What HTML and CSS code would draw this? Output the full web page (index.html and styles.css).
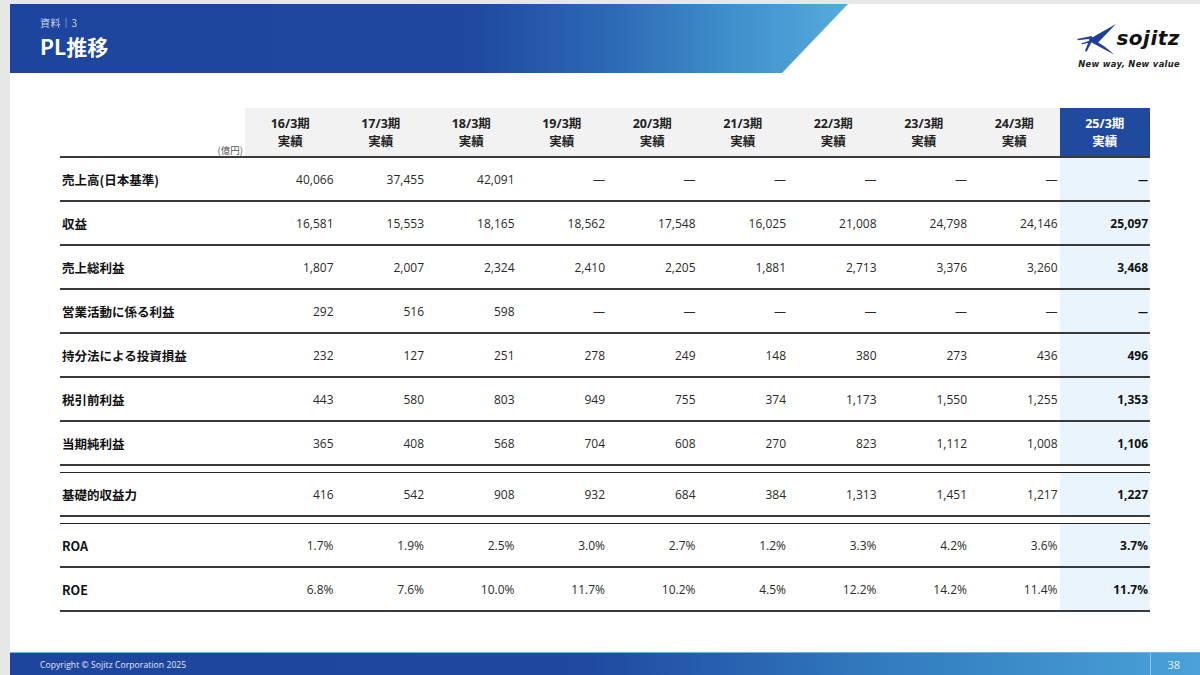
FILE: index.html
```html
<!DOCTYPE html>
<html lang="ja">
<head>
<meta charset="utf-8">
<link rel="stylesheet" href="styles.css">
</head>
<body>
<div class="slide">
  <div class="top">
    <div class="band">
      <div class="crumb">資料｜3</div>
      <div class="title">PL推移</div>
    </div>
    <div class="logo">
      <div class="logo-main">
        <svg class="mark" viewBox="0 0 40 32" width="39" height="31">
          <polygon points="12,16 40,0 20,21" fill="#1d3f9a"/>
          <polygon points="0,15.5 15,12.5 15.5,15 1,16.8" fill="#1d3f9a"/>
          <polygon points="4,20 15,16.5 15.5,18.5 5,21" fill="#1d3f9a"/>
          <polygon points="8,28 14,13 17,14.5 10,28.5" fill="#1d3f9a"/>
          <path d="M16,16 Q27,21 38,31.5 Q27,25.5 15,19 Z" fill="#1d3f9a"/>
        </svg>
        <span class="brand">sojitz</span>
      </div>
      <div class="tagline">New way, New value</div>
    </div>
  </div>

  <div class="table">
    <div class="row head">
      <div class="cell label unit">(億円)</div>
      <div class="cell h">16/3期<br>実績</div>
      <div class="cell h">17/3期<br>実績</div>
      <div class="cell h">18/3期<br>実績</div>
      <div class="cell h">19/3期<br>実績</div>
      <div class="cell h">20/3期<br>実績</div>
      <div class="cell h">21/3期<br>実績</div>
      <div class="cell h">22/3期<br>実績</div>
      <div class="cell h">23/3期<br>実績</div>
      <div class="cell h">24/3期<br>実績</div>
      <div class="cell h hl">25/3期<br>実績</div>
    </div>

    <div class="row">
      <div class="cell label">売上高(日本基準)</div>
      <div class="cell n">40,066</div><div class="cell n">37,455</div><div class="cell n">42,091</div>
      <div class="cell n">—</div><div class="cell n">—</div><div class="cell n">—</div>
      <div class="cell n">—</div><div class="cell n">—</div><div class="cell n">—</div>
      <div class="cell n last"><span class="dash">—</span></div>
    </div>
    <div class="row">
      <div class="cell label">収益</div>
      <div class="cell n">16,581</div><div class="cell n">15,553</div><div class="cell n">18,165</div>
      <div class="cell n">18,562</div><div class="cell n">17,548</div><div class="cell n">16,025</div>
      <div class="cell n">21,008</div><div class="cell n">24,798</div><div class="cell n">24,146</div>
      <div class="cell n last">25,097</div>
    </div>
    <div class="row">
      <div class="cell label">売上総利益</div>
      <div class="cell n">1,807</div><div class="cell n">2,007</div><div class="cell n">2,324</div>
      <div class="cell n">2,410</div><div class="cell n">2,205</div><div class="cell n">1,881</div>
      <div class="cell n">2,713</div><div class="cell n">3,376</div><div class="cell n">3,260</div>
      <div class="cell n last">3,468</div>
    </div>
    <div class="row">
      <div class="cell label">営業活動に係る利益</div>
      <div class="cell n">292</div><div class="cell n">516</div><div class="cell n">598</div>
      <div class="cell n">—</div><div class="cell n">—</div><div class="cell n">—</div>
      <div class="cell n">—</div><div class="cell n">—</div><div class="cell n">—</div>
      <div class="cell n last"><span class="dash">—</span></div>
    </div>
    <div class="row">
      <div class="cell label">持分法による投資損益</div>
      <div class="cell n">232</div><div class="cell n">127</div><div class="cell n">251</div>
      <div class="cell n">278</div><div class="cell n">249</div><div class="cell n">148</div>
      <div class="cell n">380</div><div class="cell n">273</div><div class="cell n">436</div>
      <div class="cell n last">496</div>
    </div>
    <div class="row">
      <div class="cell label">税引前利益</div>
      <div class="cell n">443</div><div class="cell n">580</div><div class="cell n">803</div>
      <div class="cell n">949</div><div class="cell n">755</div><div class="cell n">374</div>
      <div class="cell n">1,173</div><div class="cell n">1,550</div><div class="cell n">1,255</div>
      <div class="cell n last">1,353</div>
    </div>
    <div class="row">
      <div class="cell label">当期純利益</div>
      <div class="cell n">365</div><div class="cell n">408</div><div class="cell n">568</div>
      <div class="cell n">704</div><div class="cell n">608</div><div class="cell n">270</div>
      <div class="cell n">823</div><div class="cell n">1,112</div><div class="cell n">1,008</div>
      <div class="cell n last">1,106</div>
    </div>
    <div class="gap"></div>
    <div class="row">
      <div class="cell label">基礎的収益力</div>
      <div class="cell n">416</div><div class="cell n">542</div><div class="cell n">908</div>
      <div class="cell n">932</div><div class="cell n">684</div><div class="cell n">384</div>
      <div class="cell n">1,313</div><div class="cell n">1,451</div><div class="cell n">1,217</div>
      <div class="cell n last">1,227</div>
    </div>
    <div class="gap"></div>
    <div class="row">
      <div class="cell label">ROA</div>
      <div class="cell n">1.7%</div><div class="cell n">1.9%</div><div class="cell n">2.5%</div>
      <div class="cell n">3.0%</div><div class="cell n">2.7%</div><div class="cell n">1.2%</div>
      <div class="cell n">3.3%</div><div class="cell n">4.2%</div><div class="cell n">3.6%</div>
      <div class="cell n last">3.7%</div>
    </div>
    <div class="row">
      <div class="cell label">ROE</div>
      <div class="cell n">6.8%</div><div class="cell n">7.6%</div><div class="cell n">10.0%</div>
      <div class="cell n">11.7%</div><div class="cell n">10.2%</div><div class="cell n">4.5%</div>
      <div class="cell n">12.2%</div><div class="cell n">14.2%</div><div class="cell n">11.4%</div>
      <div class="cell n last">11.7%</div>
    </div>
  </div>

  <div class="footer">
    <div class="copy">Copyright © Sojitz Corporation 2025</div>
    <div class="page">38</div>
  </div>
</div>
</body>
</html>
```

FILE: styles.css
```css
html, body {
  margin: 0;
  padding: 0;
}
body {
  background: #e7e7e7;
  font-family: "Open Sans", "Noto Sans CJK JP", sans-serif;
  color: #222;
}
.slide {
  margin: 4px 0 0 10px;
  width: 1190px;
  height: 671px;
  background: #fff;
  display: flex;
  flex-direction: column;
  overflow: hidden;
}
.top {
  height: 69px;
  display: flex;
  justify-content: space-between;
  flex-shrink: 0;
}
.band {
  width: 838px;
  height: 69px;
  box-sizing: border-box;
  padding: 12px 0 0 30px;
  background: linear-gradient(90deg, #1d459d 0%, #1f48a0 55%, #2d6ab5 72%, #3f8fcb 86%, #55abdd 100%);
  clip-path: polygon(0 0, 100% 0, calc(100% - 66px) 100%, 0 100%);
  color: #fff;
}
.crumb {
  font-family: "Noto Sans CJK JP", sans-serif;
  font-size: 10px;
  line-height: 14px;
  color: #c9d5ee;
  letter-spacing: 0.5px;
}
.title {
  font-family: "Noto Sans CJK JP", sans-serif;
  font-weight: 700;
  font-size: 21px;
  line-height: 26px;
  margin-top: 3px;
}
.logo {
  margin: 19px 20px 0 0;
  display: flex;
  flex-direction: column;
  align-items: flex-end;
}
.logo-main {
  display: flex;
  align-items: center;
  height: 32px;
}
.mark {
  display: block;
  margin-right: 0px;
}
.brand {
  font-family: "DejaVu Sans", sans-serif;
  font-weight: 700;
  font-style: italic;
  font-size: 20px;
  line-height: 24px;
  color: #111;
  letter-spacing: 0.5px;
  margin-top: -2px;
}
.tagline {
  font-family: "DejaVu Sans", sans-serif;
  font-weight: 700;
  font-style: italic;
  font-size: 8.4px;
  color: #222;
  margin-top: 4px;
  letter-spacing: 0.3px;
}

.table {
  margin: 35px 0 0 50px;
  width: 1090px;
}
.row {
  display: grid;
  grid-template-columns: 185px repeat(10, 90.5px);
  height: 44px;
  box-sizing: border-box;
  border-bottom: 2px solid #3a3a3a;
}
.row.head {
  height: 50px;
}
.cell {
  display: flex;
  align-items: center;
  font-size: 12px;
}
.label {
  font-family: "Noto Sans CJK JP", sans-serif;
  font-weight: 700;
  font-size: 12.5px;
  color: #111;
  padding-left: 2px;
}
.unit {
  font-weight: 400;
  font-size: 9.5px;
  color: #555;
  justify-content: flex-end;
  align-items: flex-end;
  padding: 0 2px 0 0;
  line-height: 12px;
}
.h {
  background: #f2f2f2;
  justify-content: center;
  text-align: center;
  font-family: "Open Sans", "Noto Sans CJK JP", sans-serif;
  font-weight: 700;
  font-size: 12.5px;
  line-height: 18px;
  color: #222;
  padding-top: 1px;
}
.h.hl {
  background: #1f4a9e;
  color: #fff;
}
.n {
  justify-content: flex-end;
  padding-right: 2px;
  color: #2a2a2a;
}
.n.last {
  background: #eaf4fc;
  font-weight: 700;
  color: #111;
}
.dash {
  font-size: 10px;
}
.gap {
  height: 7px;
  box-sizing: border-box;
  border-bottom: 1.5px solid #222;
}
.footer {
  margin-top: auto;
  height: 23px;
  flex-shrink: 0;
  box-sizing: border-box;
  border-top: 1px solid #6fb3e6;
  background: linear-gradient(90deg, #1d459d 0%, #1f48a0 48%, #3079bd 72%, #4aa2d8 100%);
  display: flex;
  align-items: center;
  justify-content: space-between;
  color: #e4ecf8;
}
.copy {
  padding-left: 30px;
  font-size: 8.5px;
  letter-spacing: 0.1px;
}
.page {
  width: 50px;
  height: 22px;
  box-sizing: border-box;
  border-left: 1px solid #8cc6ec;
  display: flex;
  align-items: center;
  justify-content: flex-end;
  padding-right: 20px;
  font-size: 11px;
  color: #e8f0fa;
}
```
